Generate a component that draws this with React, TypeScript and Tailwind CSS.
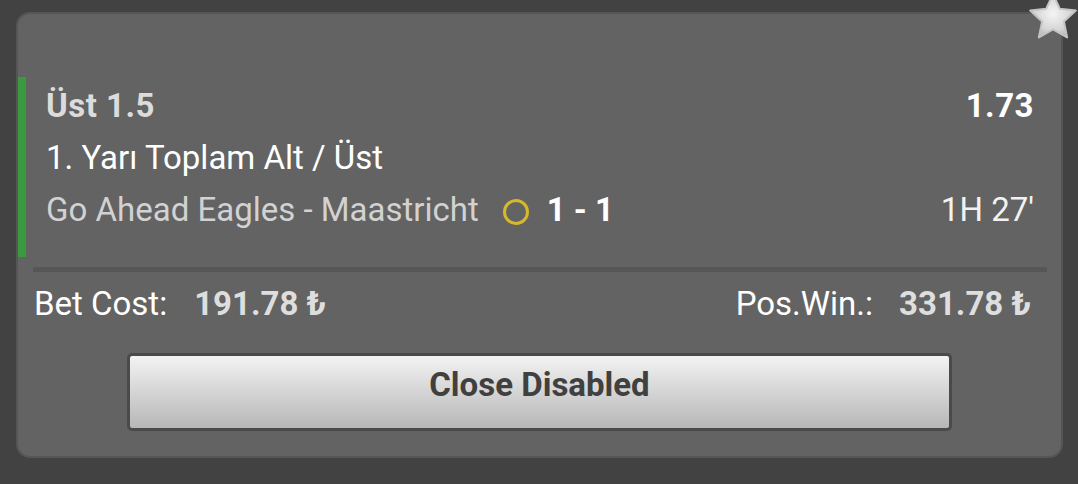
const font = { fontFamily: 'Roboto, "Noto Sans", sans-serif' };

function Star() {
  // five point star, centre (25,25)
  const pts: string[] = [];
  for (let i = 0; i < 10; i++) {
    const r = i % 2 === 0 ? 24 : 11.5;
    const a = -Math.PI / 2 + (i * Math.PI) / 5;
    pts.push(`${(25 + r * Math.cos(a)).toFixed(2)},${(25 + r * Math.sin(a)).toFixed(2)}`);
  }
  return (
    <svg width="50" height="50" viewBox="0 0 50 50" className="absolute left-[1028px] top-[-7px]">
      <defs>
        <radialGradient id="starFill" cx="50%" cy="45%" r="60%">
          <stop offset="0%" stopColor="#f4f4f4" />
          <stop offset="65%" stopColor="#d6d6d6" />
          <stop offset="100%" stopColor="#b0b0b0" />
        </radialGradient>
      </defs>
      <polygon points={pts.join(' ')} fill="url(#starFill)" strokeLinejoin="round" stroke="#c4c4c4" strokeWidth="2" />
    </svg>
  );
}

export default function App() {
  return (
    <div className="relative h-[484px] w-[1078px] overflow-hidden bg-[#424242] pl-[16px] pt-[12px]" style={font}>
      <div className="h-[446px] w-[1047px] rounded-[14px] border-2 border-[#555555] bg-[#636363] pt-[63px]">
        <div className="flex h-[180px]">
          <div className="w-[8px] bg-[#3a9a3e]" />
          <div className="flex-1 pl-[20px] pr-[27px] pt-[3px] text-[33px] leading-[52px]">
            <div className="flex justify-between">
              <span className="font-bold tracking-[0.5px] text-[#dcdcdc]">Üst 1.5</span>
              <span className="font-bold tracking-[0.5px] text-white">1.73</span>
            </div>
            <div className="text-white">1. Yarı Toplam Alt / Üst</div>
            <div className="flex items-center justify-between">
              <div className="flex items-center">
                <span className="text-[#d2d2d2]">Go Ahead Eagles - Maastricht</span>
                <span className="ml-[24px] mt-[4px] h-[26px] w-[26px] rounded-full border-[3px] border-[#d6b82c]" />
                <span className="ml-[18px] font-bold text-white">1 - 1</span>
              </div>
              <span className="text-[#f2f2f2]">1H 27'</span>
            </div>
          </div>
        </div>
        <div className="ml-[15px] mr-[14px] mt-[10px] h-[5px] bg-[#565656]" />
        <div className="mt-[12px] flex justify-between pl-[16px] pr-[30px] text-[33px] leading-[40px]">
          <div className="flex">
            <span className="text-white">Bet Cost:</span>
            <span className="ml-[27px] font-bold text-[#dedede]">191.78 ₺</span>
          </div>
          <div className="flex">
            <span className="text-white">Pos.Win.:</span>
            <span className="ml-[26px] font-bold text-[#dedede]">331.78 ₺</span>
          </div>
        </div>
        <button className="mx-auto mt-[29px] flex h-[78px] w-[825px] justify-center rounded-[5px] border-[3px] border-[#4a4a4a] bg-gradient-to-b from-[#f3f3f3] to-[#b7b7b7] pt-[10px] text-[33px] font-bold leading-[38px] text-[#404040]">
          Close Disabled
        </button>
      </div>
      <Star />
    </div>
  );
}
